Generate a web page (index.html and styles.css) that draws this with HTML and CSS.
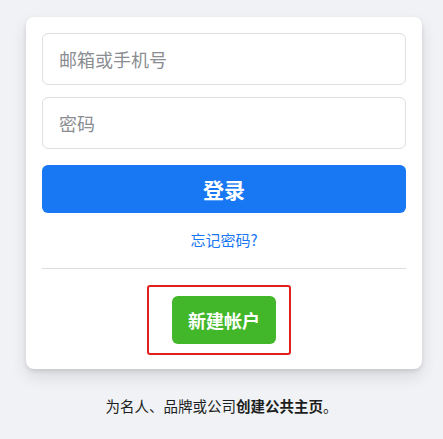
FILE: index.html
```html
<!DOCTYPE html>
<html lang="zh-CN">
<head>
    <meta charset="UTF-8">
    <meta name="viewport" content="width=device-width, initial-scale=1.0">
    <title>登录</title>
    <link rel="stylesheet" href="styles.css">
</head>
<body>
    <div class="login-card">
        <form class="login-form">
            <input class="field" type="text" placeholder="邮箱或手机号">
            <input class="field" type="password" placeholder="密码">
            <button class="login-btn" type="button">登录</button>
        </form>
        <div class="forgot">
            <a href="#">忘记密码?</a>
        </div>
        <div class="divider"></div>
        <div class="create-row">
            <div class="highlight">
                <button class="create-btn" type="button">新建帐户</button>
            </div>
        </div>
    </div>

    <p class="page-note">为名人、品牌或公司<strong>创建公共主页</strong>。</p>
</body>
</html>
```

FILE: styles.css
```css
/* General Styling */
body {
    margin: 0;
    background: #f0f2f5;
    font-family: "Noto Sans CJK SC", "Liberation Sans", sans-serif;
    color: #1c1e21;
}

.login-card {
    width: 396px;
    box-sizing: border-box;
    margin: 17px 0 0 26px;
    padding: 16px 16px 14px;
    background: #fff;
    border-radius: 8px;
    box-shadow: 0 2px 4px rgba(0, 0, 0, 0.1), 0 8px 16px rgba(0, 0, 0, 0.1);
}

.login-form {
    display: flex;
    flex-direction: column;
    gap: 12px;
}

.field {
    height: 52px;
    box-sizing: border-box;
    padding: 0 16px;
    border: 1px solid #dddfe2;
    border-radius: 6px;
    font-family: inherit;
    font-size: 18px;
    color: #1d2129;
    outline: none;
}

.field::placeholder {
    color: #8a8d91;
}

.login-btn {
    height: 48px;
    margin-top: 4px;
    border: none;
    border-radius: 6px;
    background: #1877f2;
    color: #fff;
    font-family: inherit;
    font-size: 21px;
    font-weight: bold;
    cursor: pointer;
}

.forgot {
    text-align: center;
    padding: 14px 0 0;
    height: 40px;
    box-sizing: border-box;
}

.forgot a {
    color: #1877f2;
    font-size: 15px;
    text-decoration: none;
    line-height: 20px;
}

.divider {
    height: 1px;
    background: #dadde1;
    margin: 15px 0 16px;
}

.create-row {
    display: flex;
    justify-content: center;
}

/* red marker round the new-account button */
.highlight {
    margin-right: 10px;
    padding: 9px 13px 9px 23px;
    border: 2px solid #e02020;
    border-radius: 3px;
}

.create-btn {
    display: block;
    height: 48px;
    padding: 0 16px;
    border: none;
    border-radius: 6px;
    background: #42b72a;
    color: #fff;
    font-family: inherit;
    font-size: 18px;
    font-weight: bold;
    cursor: pointer;
}

.page-note {
    margin: 27px 0 0;
    text-align: center;
    font-size: 14.5px;
    line-height: 20px;
}

.page-note strong {
    font-weight: bold;
}
```
